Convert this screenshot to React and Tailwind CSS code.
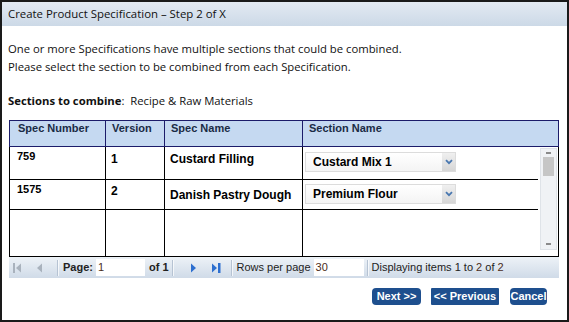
import React from "react";

function FirstIcon({ color }) {
  return (
    <svg width="9" height="12" viewBox="0 0 9 12">
      <rect x="0" y="1" width="2" height="10" fill={color} />
      <polygon points="8,1.5 3,6 8,10.5" fill={color} />
    </svg>
  );
}
function PrevIcon({ color }) {
  return (
    <svg width="7" height="12" viewBox="0 0 7 12">
      <polygon points="6,1.5 1,6 6,10.5" fill={color} />
    </svg>
  );
}
function NextIcon({ color }) {
  return (
    <svg width="7" height="12" viewBox="0 0 7 12">
      <polygon points="1,1.5 6,6 1,10.5" fill={color} />
    </svg>
  );
}
function LastIcon({ color }) {
  return (
    <svg width="10" height="12" viewBox="0 0 10 12">
      <polygon points="1,1.5 6,6 1,10.5" fill={color} />
      <rect x="7" y="1" width="2.5" height="10" fill={color} />
    </svg>
  );
}

function Select({ value }) {
  return (
    <div className="flex h-[20px] w-[151px] border border-[#dcdcdc] bg-gradient-to-b from-white to-[#f4f4f4]">
      <div className="flex flex-1 items-center pl-[7px] text-[12px] font-bold text-black">{value}</div>
      <div className="flex w-[13px] items-center justify-center bg-gradient-to-b from-[#f0f0f0] to-[#d6d6d6]">
        <svg width="8" height="6" viewBox="0 0 8 6">
          <polyline points="1,1.2 4,4.2 7,1.2" fill="none" stroke="#4a78b0" strokeWidth="1.8" />
        </svg>
      </div>
    </div>
  );
}

function Sep() {
  return <div className="h-[16px] w-[2px] border-l border-[#b6c3d3] bg-white/70" />;
}

export default function App() {
  const font = { fontFamily: '"Liberation Sans", Arial, sans-serif' };
  return (
    <div className="flex h-[322px] w-[569px] flex-col border-2 border-[#1a1a1a] bg-white" style={{ fontFamily: '"Open Sans", "Noto Sans", sans-serif' }}>
      <div className="flex h-[24px] items-center bg-gradient-to-b from-[#e3eaf2] to-[#ccd9e7] pl-[6px] text-[11.4px] text-[#111]">
        Create Product Specification – Step 2 of X
      </div>
      <div className="pl-[6px] pt-[14px] text-[11.3px] leading-[18px] text-[#111]">
        <div>One or more Specifications have multiple sections that could be combined.</div>
        <div>Please select the section to be combined from each Specification.</div>
        <div className="mt-[16px]">
          <span className="font-bold">Sections to combine</span>:&nbsp; Recipe &amp; Raw Materials
        </div>
      </div>
      <div className="ml-[7px] mt-[10px] w-[550px]" style={font}>
        <div className="flex h-[27px] border border-[#1c1c6a] bg-[#c5d9f1] text-[11px] leading-[12px] font-bold text-[#1a2b45]">
          <div className="w-[96px] border-r border-[#1c1c6a] pl-[8px] pt-[1px]">Spec Number</div>
          <div className="w-[59px] border-r border-[#1c1c6a] pl-[6px] pt-[1px]">Version</div>
          <div className="w-[138px] border-r border-[#1c1c6a] pl-[6px] pt-[1px]">Spec Name</div>
          <div className="flex-1 pl-[6px] pt-[1px]">Section Name</div>
        </div>
        <div className="flex h-[110px] border-x border-b border-black">
          <div className="flex w-[528px] flex-col text-[12px] font-bold text-black">
            <div className="flex h-[33px] border-b border-black">
              <div className="w-[96px] border-r border-black pl-[7px] pt-[1px] text-[11px]">759</div>
              <div className="w-[59px] border-r border-black pl-[5px] pt-[3px]">1</div>
              <div className="w-[138px] border-r border-black pl-[5px] pt-[3px]">Custard Filling</div>
              <div className="flex-1 pl-[2px] pt-[5px]"><Select value="Custard Mix 1" /></div>
            </div>
            <div className="flex h-[30px] border-b border-black">
              <div className="w-[96px] border-r border-black pl-[7px] pt-[1px] text-[11px]">1575</div>
              <div className="w-[59px] border-r border-black pl-[5px] pt-[2px]">2</div>
              <div className="w-[138px] border-r border-black pl-[5px] pt-[6px]">Danish Pastry Dough</div>
              <div className="flex-1 pl-[2px] pt-[4px]"><Select value="Premium Flour" /></div>
            </div>
            <div className="flex flex-1">
              <div className="w-[96px] border-r border-black" />
              <div className="w-[59px] border-r border-black" />
              <div className="w-[138px] border-r border-black" />
              <div className="flex-1" />
            </div>
          </div>
          <div className="flex flex-1 justify-center pt-[1px] pb-[6px]">
            <div className="flex w-[17px] flex-col items-center border border-[#dfe3e8] bg-[#f0f2f5]">
              <div className="flex h-[8px] items-center justify-center">
                <div className="h-[2px] w-[5px] bg-[#8a8a8a]" />
              </div>
              <div className="h-[19px] w-[11px] bg-[#c6c6c6]" />
              <div className="flex-1" />
              <div className="flex h-[10px] items-center justify-center">
                <div className="h-[2px] w-[5px] bg-[#8a8a8a]" />
              </div>
            </div>
          </div>
        </div>
        <div className="flex h-[21px] items-center bg-gradient-to-b from-[#edf2f7] to-[#d0dbe8] text-[11px] text-[#222]">
          <div className="ml-[4px]"><FirstIcon color="#a9b2bd" /></div>
          <div className="ml-[14px]"><PrevIcon color="#a9b2bd" /></div>
          <div className="ml-[14px]"><Sep /></div>
          <span className="ml-[4px] font-bold">Page:</span>
          <div className="ml-[3px] h-[17px] w-[49px] bg-white pl-[2px] leading-[17px] text-[#4a2c1a]">1</div>
          <span className="ml-[4px] font-bold">of 1</span>
          <div className="ml-[3px]"><Sep /></div>
          <div className="ml-[16px]"><NextIcon color="#2d6fcf" /></div>
          <div className="ml-[14px]"><LastIcon color="#2d6fcf" /></div>
          <div className="ml-[10px]"><Sep /></div>
          <span className="ml-[4px]">Rows per page</span>
          <div className="ml-[3px] h-[17px] w-[50px] bg-white pl-[2px] leading-[17px] text-[#4a2c1a]">30</div>
          <div className="ml-[3px]"><Sep /></div>
          <span className="ml-[3px]">Displaying items 1 to <span className="text-[#4a2c1a]">2</span> of <span className="text-[#4a2c1a]">2</span></span>
        </div>
      </div>
      <div className="mt-[10px] flex justify-end pr-[20px] text-[11px] font-bold whitespace-nowrap text-white" style={font}>
        <div className="flex h-[17px] w-[49px] items-center justify-center rounded-[4px] bg-[#1e4f8e]">Next &gt;&gt;</div>
        <div className="ml-[10px] flex h-[17px] w-[68px] items-center justify-center rounded-[1px] bg-[#1e4f8e]">&lt;&lt; Previous</div>
        <div className="ml-[11px] flex h-[17px] w-[37px] items-center justify-center rounded-[4px] bg-[#1e4f8e]">Cancel</div>
      </div>
    </div>
  );
}
